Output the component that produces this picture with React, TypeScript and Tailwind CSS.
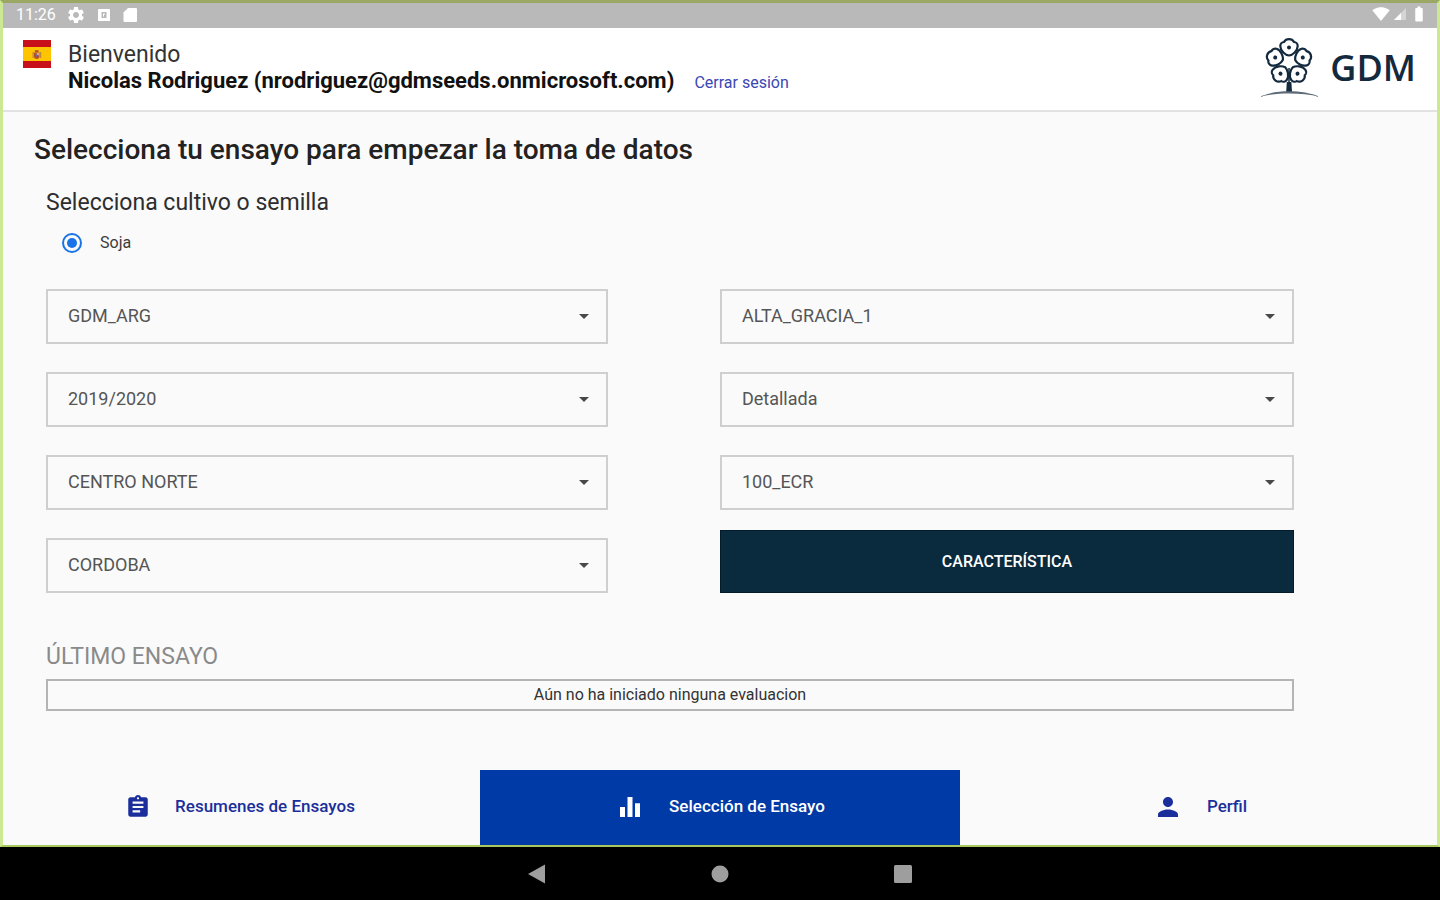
import { useState } from 'react';
import type { ReactNode } from 'react';
import {
  MdArrowDropDown,
  MdAssignment,
  MdBatteryFull,
  MdEqualizer,
  MdPerson,
  MdSettings,
  MdSignalWifi4Bar,
} from 'react-icons/md';

type Field = { id: string; label: string; value: string };

const leftFields: Field[] = [
  { id: 'programa', label: 'Programa', value: 'GDM_ARG' },
  { id: 'campania', label: 'Campaña', value: '2019/2020' },
  { id: 'region', label: 'Región', value: 'CENTRO NORTE' },
  { id: 'provincia', label: 'Provincia', value: 'CORDOBA' },
];

const rightFields: Field[] = [
  { id: 'localidad', label: 'Localidad', value: 'ALTA_GRACIA_1' },
  { id: 'tipo', label: 'Tipo', value: 'Detallada' },
  { id: 'ensayo', label: 'Ensayo', value: '100_ECR' },
];

function SelectField({ id, label, value }: Field) {
  return (
    <div className="relative">
      <select
        id={id}
        aria-label={label}
        defaultValue={value}
        className="block h-[55px] w-full appearance-none border-2 border-[#cfcfcf] bg-[#fafafa] pr-12 pb-0.5 pl-5 text-lg text-[#555555]"
      >
        <option>{value}</option>
      </select>
      <MdArrowDropDown
        size={24}
        className="pointer-events-none absolute top-[15px] right-3 text-[#484848]"
      />
    </div>
  );
}

function SpainFlag() {
  return (
    <svg viewBox="0 0 28 28" className="h-7 w-7 shrink-0" role="img" aria-label="España">
      <rect width="28" height="28" fill="#c8101a" />
      <rect y="7" width="28" height="14" fill="#ffc400" />
      <path d="M9.5 12h1.2v6H9.5zM17 12h1.2v6H17z" fill="#b98a3c" />
      <path d="M11 12.5h5.5v3.8a2.7 2.7 0 0 1-5.5 0z" fill="#b5502c" />
      <path d="M11.6 10.2h4.2l-.5 2h-3.2z" fill="#a8552a" />
      <rect x="13.7" y="13" width="2.2" height="2.3" fill="#d9b0a0" />
      <circle cx="13.8" cy="15.6" r="1" fill="#5a6aa8" />
    </svg>
  );
}

function TreeLogo() {
  const petals = [0, 72, 144, 216, 288];
  return (
    <svg viewBox="0 0 64 62" className="h-[62px] w-16" fill="none" stroke="#13293d" aria-hidden="true">
      {petals.map((angle) => (
        <g key={angle} transform={`rotate(${angle} 31 25)`}>
          <path
            d="M31 18.500C27.500 18 22.300 14 22.300 9C22.300 7 24 5.200 26 5C27 3.100 28.800 2.100 31 2.100C33.200 2.100 35 3.100 36 5C38 5.200 39.700 7 39.700 9C39.700 14 34.500 18 31 18.500Z"
            strokeWidth="2.200"
          />
          <circle cx="31" cy="10.500" r="2" fill="#13293d" stroke="none" />
        </g>
      ))}
      <path d="M31 31V45" strokeWidth="1.500" />
      <path d="M28.800 45h4.600l.6 10h-5.800z" fill="#13293d" stroke="none" />
      <path d="M1 60C10 56 20 54.300 31 54.300S53 56 62 60C52 57.300 42 56.500 31 56.500S11 57.300 1 60Z" fill="#5d6b78" stroke="none" />
    </svg>
  );
}

function NavItem({
  icon,
  label,
  active,
  onSelect,
}: {
  icon: ReactNode;
  label: string;
  active: boolean;
  onSelect: () => void;
}) {
  return (
    <button
      type="button"
      onClick={onSelect}
      aria-current={active ? 'page' : undefined}
      className={
        active
          ? 'flex items-center justify-center gap-6 bg-[#003aa6] pb-1 text-[17px] font-medium text-white'
          : 'flex items-center justify-center gap-6 pb-1 text-[17px] font-medium text-[#1b2f9c]'
      }
    >
      {icon}
      {label}
    </button>
  );
}

export default function App() {
  const [tab, setTab] = useState('seleccion');

  return (
    <div className="flex min-h-screen flex-col bg-black font-['Roboto','Liberation_Sans',sans-serif]">
      <div className="relative flex grow flex-col bg-[#fafafa]">
        <div className="flex h-7 items-center justify-between bg-[#b9b9b9] pr-3 pl-4 text-white">
          <div className="flex items-center gap-2.5 pt-px">
            <span className="text-base">11:26</span>
            <MdSettings size={20} />
            <svg viewBox="0 0 16 16" className="h-4 w-4" aria-hidden="true">
              <path
                fillRule="evenodd"
                fill="currentColor"
                d="M3 2h10a1 1 0 0 1 1 1v11H2V3a1 1 0 0 1 1-1zM5.500 5v6h5V5zM7 6.500h2v1H8v2H7z"
              />
            </svg>
            <svg viewBox="0 0 16 16" className="h-4 w-4" aria-hidden="true">
              <path fill="currentColor" d="M6 1h8a1 1 0 0 1 1 1v12a1 1 0 0 1-1 1H2.500a1 1 0 0 1-1-1V5.500z" />
            </svg>
          </div>
          <div className="flex items-center gap-0.5">
            <MdSignalWifi4Bar size={18} />
            <svg viewBox="0 0 16 16" className="h-4 w-4" aria-hidden="true">
              <path fill="#ffffff" fillOpacity="0.4" d="M2 14L14 2v12z" />
              <path fill="#ffffff" d="M2 14l7-7v7z" />
            </svg>
            <MdBatteryFull size={18} />
          </div>
        </div>

        <header className="flex h-[84px] items-start justify-between border-b-2 border-[#e2e2e2] bg-white pr-6 pl-[23px]">
          <div className="flex gap-[17px] pt-3">
            <SpainFlag />
            <div className="pt-0.5 leading-[26px]">
              <p className="text-[23px] leading-[26px] text-[#333333]">Bienvenido</p>
              <p className="flex items-baseline gap-5">
                <span className="text-[22px] leading-[26px] font-bold text-[#111111]">
                  Nicolas Rodriguez (nrodriguez@gdmseeds.onmicrosoft.com)
                </span>
                <a href="#salir" className="text-base text-[#3b47b5]">
                  Cerrar sesión
                </a>
              </p>
            </div>
          </div>
          <div className="flex items-center gap-2 pt-[9px]">
            <TreeLogo />
            <span className="font-['Open_Sans',sans-serif] text-4xl font-semibold text-[#13293d]">GDM</span>
          </div>
        </header>

        <main className="flex grow flex-col pr-[146px] pl-[46px]">
          <h1 className="-ml-3 pt-[18px] text-[28px] leading-10 font-medium text-[#222222]">
            Selecciona tu ensayo para empezar la toma de datos
          </h1>
          <fieldset className="pt-[17px]">
            <legend className="float-left w-full text-[23px] leading-8 text-[#2e2e2e]">
              Selecciona cultivo o semilla
            </legend>
            <div className="flex w-full items-center gap-[18px] pt-3 pl-4">
              <input
                type="radio"
                id="soja"
                name="cultivo"
                defaultChecked
                className="flex h-5 w-5 appearance-none items-center justify-center rounded-full border-2 border-[#1a73e8] before:h-2.5 before:w-2.5 before:rounded-full before:bg-[#1a73e8]"
              />
              <label htmlFor="soja" className="text-base text-[#3c3c3c]">
                Soja
              </label>
            </div>
          </fieldset>

          <div className="flex justify-between pt-[34px]">
            <div className="flex w-[45%] flex-col gap-7">
              {leftFields.map((field) => (
                <SelectField key={field.id} {...field} />
              ))}
            </div>
            <div className="flex w-[46%] flex-col gap-5">
              <div className="flex flex-col gap-7">
                {rightFields.map((field) => (
                  <SelectField key={field.id} {...field} />
                ))}
              </div>
              <button
                type="button"
                className="h-[63px] border border-[#041b29] bg-[#0a2a3d] text-base font-medium text-white"
              >
                CARACTERÍSTICA
              </button>
            </div>
          </div>

          <section className="pt-12">
            <h2 className="text-[23px] leading-8 text-[#8a8a8a]">ÚLTIMO ENSAYO</h2>
            <p className="mt-1.5 border-2 border-[#b4b4b4] text-center text-base leading-7 text-[#333333]">
              Aún no ha iniciado ninguna evaluacion
            </p>
          </section>
        </main>

        <nav className="grid h-[77px] grid-cols-3">
          <NavItem
            icon={<MdAssignment size={26} />}
            label="Resumenes de Ensayos"
            active={tab === 'resumenes'}
            onSelect={() => setTab('resumenes')}
          />
          <NavItem
            icon={<MdEqualizer size={30} />}
            label="Selección de Ensayo"
            active={tab === 'seleccion'}
            onSelect={() => setTab('seleccion')}
          />
          <NavItem
            icon={<MdPerson size={30} />}
            label="Perfil"
            active={tab === 'perfil'}
            onSelect={() => setTab('perfil')}
          />
        </nav>

        <div className="pointer-events-none absolute inset-0 border-x-[3px] border-t-[3px] border-b-2 border-x-[#cde893] border-t-[#9aa863] border-b-[#a9c860]" />
      </div>

      <div className="flex h-[53px] items-center justify-center gap-[164px]">
        <button type="button" aria-label="Atrás">
          <svg viewBox="0 0 20 20" className="h-5 w-5" aria-hidden="true">
            <path d="M1 10L18 0.500v19z" fill="#9e9e9e" />
          </svg>
        </button>
        <button type="button" aria-label="Inicio">
          <svg viewBox="0 0 18 18" className="h-[18px] w-[18px]" aria-hidden="true">
            <circle cx="9" cy="9" r="8.500" fill="#9e9e9e" />
          </svg>
        </button>
        <button type="button" aria-label="Recientes">
          <svg viewBox="0 0 20 20" className="h-5 w-5" aria-hidden="true">
            <rect x="1" y="1" width="18" height="18" rx="1.500" fill="#9e9e9e" />
          </svg>
        </button>
      </div>
    </div>
  );
}
